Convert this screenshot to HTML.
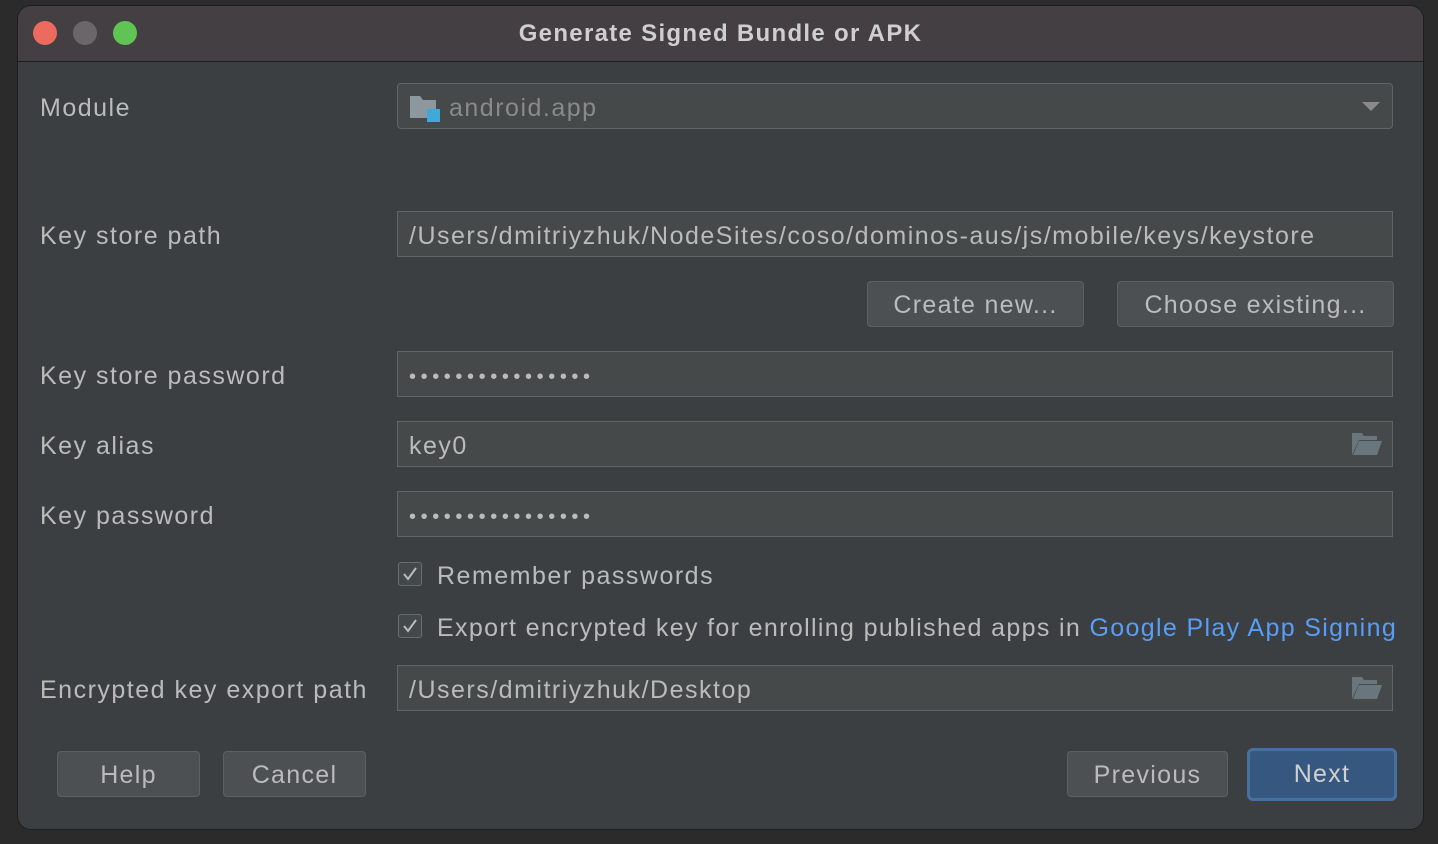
<!DOCTYPE html><html><head><style>
body{margin:0;width:1438px;height:844px;background:#2b2b2b;overflow:hidden;font-family:"Liberation Sans",sans-serif;position:relative}
.dlg{position:absolute;left:17px;top:5px;width:1405px;height:823px;background:#3c3f41;border:1px solid #1e1e1e;border-radius:14px;overflow:hidden}
.tb{position:absolute;left:0;top:0;width:100%;height:55px;background:#433f43;border-bottom:1px solid #1f1f1f}
.tb .t{position:absolute;left:0;right:0;top:14px;text-align:center;color:#cfcfcf;font-weight:bold;font-size:24px;letter-spacing:1.3px}
.dot{position:absolute;top:15px;width:24px;height:24px;border-radius:50%}
.a{position:absolute;color:#bbbbbb;font-size:25px;letter-spacing:1.5px;white-space:nowrap}
.f{position:absolute;left:397px;width:996px;height:46px;background:#45494a;border:1px solid #646464;box-sizing:border-box}
.f span{position:absolute;left:11px;top:10px;color:#bbbbbb;font-size:25px;white-space:nowrap;letter-spacing:1.5px}
.b{position:absolute;height:46px;background:#4c5052;border:1px solid #5e6060;border-radius:4px;box-sizing:border-box;color:#bbbbbb;font-size:25px;letter-spacing:1.3px;text-align:center;line-height:46px}
.cb{position:absolute;left:398px;width:24px;height:24px;border:1px solid #6b6b6b;border-radius:3px;background:#43494a;box-sizing:border-box}
.f span.dots{letter-spacing:4.6px;top:14px;font-size:20px}
.fo{position:absolute;right:10px;top:11px}
</style></head><body>
<div class="dlg">
<div class="tb"><div class="dot" style="left:15px;background:#ed6a5e"></div><div class="dot" style="left:55px;background:#6b6769"></div><div class="dot" style="left:95px;background:#5fc454"></div><div class="t">Generate Signed Bundle or APK</div></div>
</div>
<div class="a" style="left:40px;top:94px">Module</div>
<div class="f" style="top:83px;border-radius:4px"><svg style="position:absolute;left:12px;top:10px" width="32" height="30"><path d="M0 2h10l3 4h13v18H0z" fill="#8d979e"/><rect x="17" y="15" width="13" height="13" fill="#3fa9d8"/></svg><span style="left:51px;color:#8a8a8a">android.app</span><svg style="position:absolute;right:12px;top:18px" width="18" height="10"><path d="M0 0h18L9 9z" fill="#8a8a8a"/></svg></div>
<div class="a" style="left:40px;top:222px">Key store path</div>
<div class="f" style="top:211px"><span>/Users/dmitriyzhuk/NodeSites/coso/dominos-aus/js/mobile/keys/keystore</span></div>
<div class="b" style="left:867px;top:281px;width:217px">Create new...</div>
<div class="b" style="left:1117px;top:281px;width:277px">Choose existing...</div>
<div class="a" style="left:40px;top:362px">Key store password</div>
<div class="f" style="top:351px"><span class="dots">••••••••••••••••</span></div>
<div class="a" style="left:40px;top:432px">Key alias</div>
<div class="f" style="top:421px"><span>key0</span><svg class="fo" width="30" height="22"><path d="M0 0h10l2 3h13v4H7L0 22z" fill="#6a767d"/><path d="M7 8h23l-5 14H1z" fill="#6a767d"/></svg></div>
<div class="a" style="left:40px;top:502px">Key password</div>
<div class="f" style="top:491px"><span class="dots">••••••••••••••••</span></div>
<div class="cb" style="top:562px"><svg width="22" height="22"><path d="M5 11l4 5 8-11" stroke="#bbb" stroke-width="2" fill="none"/></svg></div>
<div class="a" style="left:437px;top:562px">Remember passwords</div>
<div class="cb" style="top:614px"><svg width="22" height="22"><path d="M5 11l4 5 8-11" stroke="#bbb" stroke-width="2" fill="none"/></svg></div>
<div class="a" style="left:437px;top:614px;letter-spacing:1.35px">Export encrypted key for enrolling published apps in <span style="color:#589df6">Google Play App Signing</span></div>
<div class="a" style="left:40px;top:676px">Encrypted key export path</div>
<div class="f" style="top:665px"><span>/Users/dmitriyzhuk/Desktop</span><svg class="fo" width="30" height="22"><path d="M0 0h10l2 3h13v4H7L0 22z" fill="#6a767d"/><path d="M7 8h23l-5 14H1z" fill="#6a767d"/></svg></div>
<div class="b" style="left:57px;top:751px;width:143px">Help</div>
<div class="b" style="left:223px;top:751px;width:143px">Cancel</div>
<div class="b" style="left:1067px;top:751px;width:161px">Previous</div>
<div class="b" style="left:1247px;top:748px;width:150px;height:53px;line-height:47px;background:#365880;border:3px solid #46709d;border-radius:6px;color:#d0d0d0">Next</div>
</body></html>
